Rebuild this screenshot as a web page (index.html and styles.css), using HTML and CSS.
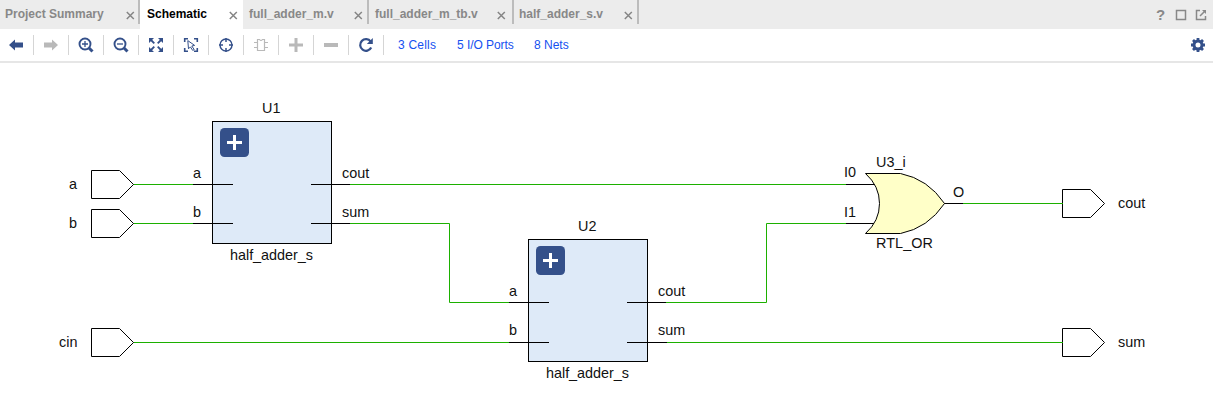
FILE: index.html
```html
<!DOCTYPE html>
<html lang="en">
<head>
<meta charset="utf-8">
<title>Schematic</title>
<link rel="stylesheet" href="styles.css">
</head>
<body>
<svg class="defs" width="0" height="0">
  <symbol id="close" viewBox="0 0 9 9"><path d="M.8 1L7.8 8M7.8 1L.8 8" fill="none" stroke="#858585" stroke-width="1.5"/></symbol>
  <symbol id="arrow" viewBox="0 0 16 16"><path d="M1 8L7 2.5V5.5H15V10.5H7V13.5Z" fill="currentColor"/></symbol>
</svg>
<header class="tabs">
  <div class="tab tab-summary"><span>Project Summary</span><svg class="close"><use href="#close"/></svg></div>
  <div class="tab tab-active"><span>Schematic</span><svg class="close"><use href="#close"/></svg></div>
  <div class="tab tab-adder"><span>full_adder_m.v</span><svg class="close"><use href="#close"/></svg></div>
  <div class="tab tab-bench"><span>full_adder_m_tb.v</span><svg class="close"><use href="#close"/></svg></div>
  <div class="tab tab-half"><span>half_adder_s.v</span><svg class="close"><use href="#close"/></svg></div>
  <div class="window-actions">
    <span class="help">?</span>
    <svg width="12" height="12" viewBox="0 0 12 12"><rect x="1.5" y="1.5" width="9" height="9" fill="none" stroke="#888" stroke-width="1.5"/></svg>
    <svg width="12" height="12" viewBox="0 0 12 12" fill="none" stroke="#888" stroke-width="1.5"><path d="M5 1.5H1.5V10.5H10.5V7M5 7L9.5 2.5"/><path d="M7 1H11V5Z" fill="#888" stroke="none"/></svg>
  </div>
</header>
<nav class="toolbar">
  <span class="tool"><svg class="icon"><use href="#arrow"/></svg></span>
  <span class="tool off"><svg class="icon flip"><use href="#arrow"/></svg></span>
  <span class="tool"><svg class="icon" viewBox="0 0 16 16"><circle cx="7" cy="7" r="5.5"/><path d="M4 7H10M7 4V10" stroke-width="1.3"/><path d="M11 11L14.5 14.5" stroke-width="3"/></svg></span>
  <span class="tool"><svg class="icon" viewBox="0 0 16 16"><circle cx="7" cy="7" r="5.5"/><path d="M4 7H10" stroke-width="1.3"/><path d="M11 11L14.5 14.5" stroke-width="3"/></svg></span>
  <span class="tool"><svg class="icon" viewBox="0 0 16 16"><path class="solid" d="M1 1H6L1 6ZM15 1V6L10 1ZM1 15V10L6 15ZM15 15H10L15 10Z"/><path d="M3 3L6.3 6.3M13 3L9.7 6.3M3 13L6.3 9.7M13 13L9.7 9.7" stroke-width="1.8"/></svg></span>
  <span class="tool"><svg class="icon" viewBox="0 0 16 16"><path d="M1.7 5V1.7H5M11 1.7H14.3V5M14.3 11V14.3H11M5 14.3H1.7V11" stroke-width="1.6"/><path d="M4.8 3.6L11.6 8.4L8.8 9L11.2 12.6L9.7 13.4L7.4 9.9L5.5 11.8Z" stroke-width="1"/></svg></span>
  <span class="tool"><svg class="icon" viewBox="0 0 16 16"><circle cx="8" cy="8" r="6" stroke-width="1.4"/><path d="M8 1V5M8 11V15M1 8H5M11 8H15" stroke-width="1.5"/></svg></span>
  <span class="tool off"><svg class="icon" viewBox="0 0 16 16"><path d="M4.5 2.5H6.5Q8 4.5 9.5 2.5H11.5V13.5H4.5ZM1 5.5H4.5M1 10.5H4.5M11.5 5.5H15M11.5 10.5H15" stroke-width="1.2"/></svg></span>
  <span class="tool off"><svg class="icon" viewBox="0 0 16 16"><path d="M1 8H15M8 1V15" stroke-width="3"/></svg></span>
  <span class="tool off"><svg class="icon" viewBox="0 0 16 16"><path d="M1 8H15" stroke-width="4"/></svg></span>
  <span class="tool"><svg class="icon" viewBox="0 0 16 16"><path d="M12.7 4.6A5.8 5.8 0 1 0 13.2 10.5" stroke-width="2.2"/><path class="solid" d="M14.8 1V7H8.8Z"/></svg></span>
  <a class="stat cells">3 Cells</a><a class="stat ports">5 I/O Ports</a><a class="stat nets">8 Nets</a>
  <svg class="gear" viewBox="0 0 16 16"><circle cx="8" cy="8" r="4" fill="none" stroke="#34508a" stroke-width="3"/><path d="M8 1V4M8 12V15M1 8H4M12 8H15M3 3L5 5M11 11L13 13M13 3L11 5M5 11L3 13" stroke="#34508a" stroke-width="2.8"/></svg>
</nav>
<main>
<svg class="schematic" width="1213" height="344" viewBox="0 63 1213 344">
  <defs>
    <path id="port" d="M.5 .5H28.5L42.5 14.5L28.5 28.5H.5Z" fill="#fff" stroke="#000" stroke-width="1"/>
    <g id="cell">
      <rect x=".5" y=".5" width="119" height="122" fill="#deeaf8" stroke="#000"/>
      <rect x="8" y="7" width="29" height="29" rx="4.5" fill="#34508a"/>
      <path d="M15 21.5H30M22.5 14V29" stroke="#fff" stroke-width="3"/>
      <path d="M-19 63.5H21M99 63.5H138" stroke="#000"/>
    </g>
  </defs>
  <g class="wire">
    <path d="M133 184.5H194M133 223.5H194M133 342.5H511"/>
    <path d="M349 184.5H847M349 223.5H449.5V302.5H511"/>
    <path d="M666 302.5H766.5V223.5H847M666 342.5H1063M963 203.5H1063"/>
  </g>
  <use href="#port" x="91" y="170"/>
  <use href="#port" x="91" y="209"/>
  <use href="#port" x="91" y="328"/>
  <use href="#port" x="1062" y="189"/>
  <use href="#port" x="1062" y="328"/>
  <path class="wire" d="M1060 203.5H1063M1060 342.5H1063"/>
  <use href="#cell" x="212" y="121"/>
  <use href="#cell" x="528" y="239"/>
  <path class="pin" d="M193 223.5H233M311 223.5H350M509 342.5H549M627 342.5H667M846 184.5H875M846 223.5H874M944 203.5H963"/>
  <path d="M865.5 173.5H900.5Q928 179 944.5 203.5Q928 228 900.5 233.5H865.5Q879.5 221 879.5 203.5Q879.5 186 865.5 173.5Z" fill="#ffffc8" stroke="#000"/>
  <g class="label">
    <text x="262" y="113">U1</text><text x="230" y="260" textLength="83">half_adder_s</text>
    <text x="578" y="231">U2</text><text x="546" y="378" textLength="83">half_adder_s</text>
    <text x="69" y="189">a</text><text x="69" y="228">b</text><text x="59" y="347">cin</text>
    <text x="193" y="178">a</text><text x="193" y="217">b</text>
    <text x="509" y="296">a</text><text x="509" y="335">b</text>
    <text x="342" y="178">cout</text><text x="342" y="217">sum</text>
    <text x="658" y="296">cout</text><text x="658" y="335">sum</text>
    <text x="844" y="177">I0</text><text x="844" y="217">I1</text>
    <text x="876" y="167">U3_i</text><text x="876" y="248" textLength="57">RTL_OR</text>
    <text x="953" y="197">O</text><text x="1118" y="208">cout</text><text x="1118" y="347">sum</text>
  </g>
</svg>
</main>
</body>
</html>
```
FILE: styles.css
```css
* { box-sizing: border-box; }
body { margin: 0; width: 1213px; height: 407px; overflow: hidden; background: #fff; font-family: "Liberation Sans", Arial, sans-serif; font-size: 12px; }
.defs { display: none; }
.tabs { display: flex; height: 29px; background: #ececec; }
.tab { display: flex; align-items: center; justify-content: space-between; height: 24px; padding: 4px 4px 0 5px; border-right: 2px solid #bcbcbc; color: #888; font-weight: bold; white-space: nowrap; }
.close { width: 9px; height: 9px; margin-top: 2px; }
.tab-summary { width: 140px; padding-right: 3px; }
.tab-active { width: 103px; height: 29px; padding: 0 5px 1px 7px; border: 0; background: #fff; color: #000; }
.tab-adder { width: 126px; padding-left: 6px; }
.tab-bench { width: 145px; padding-left: 6px; padding-right: 6px; }
.tab-half { width: 125px; padding-left: 5px; }
.window-actions { display: flex; align-items: center; gap: 8px; margin-left: auto; padding-right: 6px; }
.help { width: 10px; margin-right: 1px; color: #888; font: bold 15px "Liberation Sans", sans-serif; }
.toolbar { display: flex; align-items: center; height: 34px; padding: 0 7px 0 0; border-bottom: 2px solid #e6e6e6; }
.tool { display: flex; align-items: center; width: 35px; height: 20px; padding-left: 9px; border-right: 1px solid #d5d5d5; color: #34508a; }
.tool:first-child { width: 34px; padding-left: 8px; }
.off { color: #b9b9b9; }
.icon { width: 16px; height: 16px; fill: none; stroke: currentColor; stroke-width: 1.9; }
.icon use { stroke: none; }
.flip { transform: scaleX(-1); }
.solid { fill: currentColor; stroke: none; }
.stat { color: #1450f0; white-space: nowrap; }
.cells { width: 59px; margin-left: 14px; letter-spacing: .2px; }
.ports { width: 77px; letter-spacing: -.05px; }
.gear { width: 16px; height: 16px; margin-left: auto; }
.schematic { display: block; }
.wire { fill: none; stroke: #1cb000; }
.pin { stroke: #000; }
.label { font-size: 14.4px; fill: #111; }
```
